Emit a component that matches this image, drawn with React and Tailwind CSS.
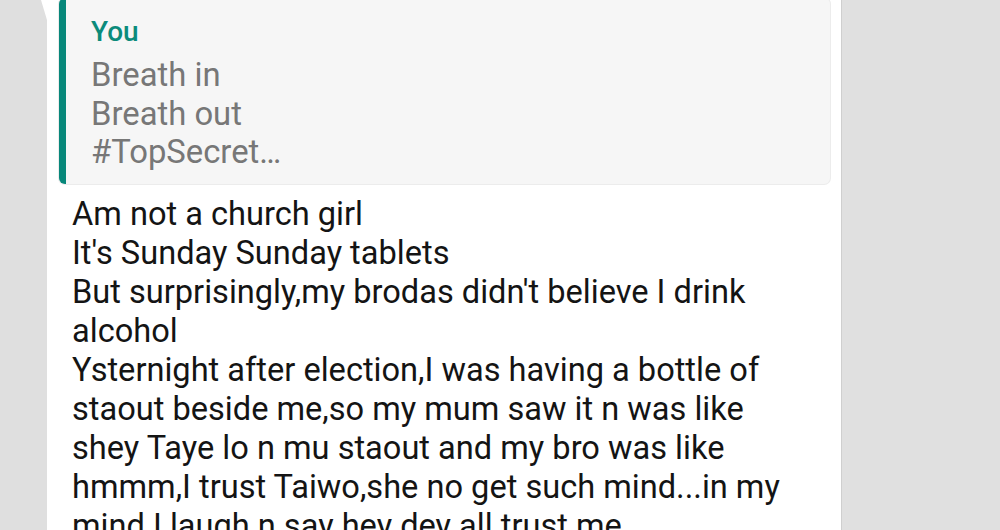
import React from "react";

const lines = [
  "Am not a church girl",
  "It's Sunday Sunday tablets",
  "But surprisingly,my brodas didn't believe I drink",
  "alcohol",
  "Ysternight after election,I was having a bottle of",
  "staout beside me,so my mum saw it n was like",
  "shey Taye lo n mu staout and my bro was like",
  "hmmm,I trust Taiwo,she no get such mind...in my",
  "mind I laugh n say hey dey all trust me",
];

export default function App() {
  return (
    <div
      className="flex h-[530px] w-[1000px] overflow-hidden bg-[#dfdfdf]"
      style={{ fontFamily: "Roboto, 'Noto Sans', sans-serif" }}
    >
      <div className="relative w-[47px] shrink-0 bg-[#dfdfdf]">
        <svg className="absolute right-0 top-0" width="6" height="20" viewBox="0 0 6 20">
          <polygon points="0,0 6,0 6,20" fill="#ffffff" />
        </svg>
      </div>
      <div className="w-[794px] shrink-0 bg-white pl-[12px] pr-[11px] shadow-[1px_0_1px_rgba(0,0,0,0.12)]">
        <div className="mt-[-2px] rounded-[6px] border-l-[7px] border-[#07877a] bg-[#f6f6f6] pl-[25px] pt-[14px] pb-[12px] shadow-[0_0_0_1px_#ececec]">
          <div className="text-[28px] font-medium leading-[40px] text-[#0b8b7b]">You</div>
          <div className="mt-[4px] text-[32.8px] leading-[38.5px] text-[#777777]">
            <div>Breath in</div>
            <div>Breath out</div>
            <div>#TopSecret…</div>
          </div>
        </div>
        <div className="mt-[11px] pl-[13px] text-[32.6px] leading-[39.1px] text-[#141414]">
          {lines.map((l, i) => (
            <div key={i} className="whitespace-nowrap">{l}</div>
          ))}
        </div>
      </div>
      <div className="flex-1 border-l border-[#cfcfcf] bg-[#e0e0e0]" />
    </div>
  );
}
